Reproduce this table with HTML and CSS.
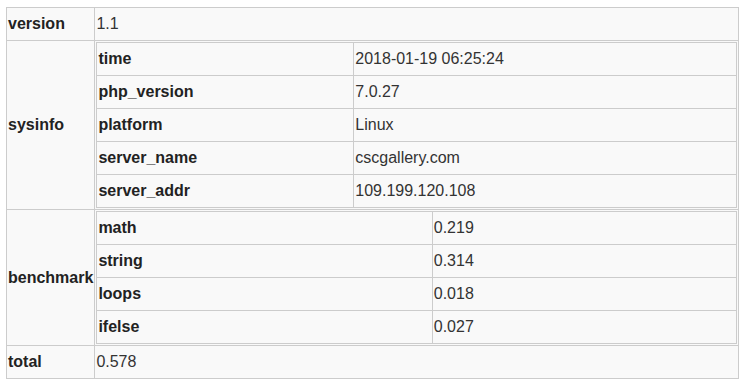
FILE: index.html
```html
<!DOCTYPE html>
<html lang="en">
<head>
    <meta charset="UTF-8">
    <title>Benchmark</title>
    <link rel="stylesheet" href="styles.css">
</head>
<body>
    <table class="report">
        <tr>
            <th class="key">version</th>
            <td>1.1</td>
        </tr>
        <tr>
            <th class="key">sysinfo</th>
            <td class="nest">
                <table class="report">
                    <tr><th>time</th><td>2018-01-19 06:25:24</td></tr>
                    <tr><th>php_version</th><td>7.0.27</td></tr>
                    <tr><th>platform</th><td>Linux</td></tr>
                    <tr><th>server_name</th><td>cscgallery.com</td></tr>
                    <tr><th>server_addr</th><td>109.199.120.108</td></tr>
                </table>
            </td>
        </tr>
        <tr>
            <th class="key">benchmark</th>
            <td class="nest">
                <table class="report">
                    <tr><th>math</th><td>0.219</td></tr>
                    <tr><th>string</th><td>0.314</td></tr>
                    <tr><th>loops</th><td>0.018</td></tr>
                    <tr><th>ifelse</th><td>0.027</td></tr>
                </table>
            </td>
        </tr>
        <tr>
            <th class="key">total</th>
            <td>0.578</td>
        </tr>
    </table>
</body>
</html>
```

FILE: styles.css
```css
body {
    margin: 7px 6px;
    font-family: 'Liberation Sans', Arial, sans-serif;
    font-size: 16px;
    color: #333;
    background: #fff;
}

.report {
    width: 100%;
    border-collapse: collapse;
    background: #f9f9f9;
    border: 1px solid #ccc;
}

.report th,
.report td {
    border: 1px solid #ccc;
    padding: 7px 1px;
    line-height: 18px;
    text-align: left;
    vertical-align: middle;
}

.report th {
    font-weight: bold;
    color: #222;
}

.report th.key {
    width: 1%;
    white-space: nowrap;
}

.report td.nest {
    padding: 1px;
}
```
